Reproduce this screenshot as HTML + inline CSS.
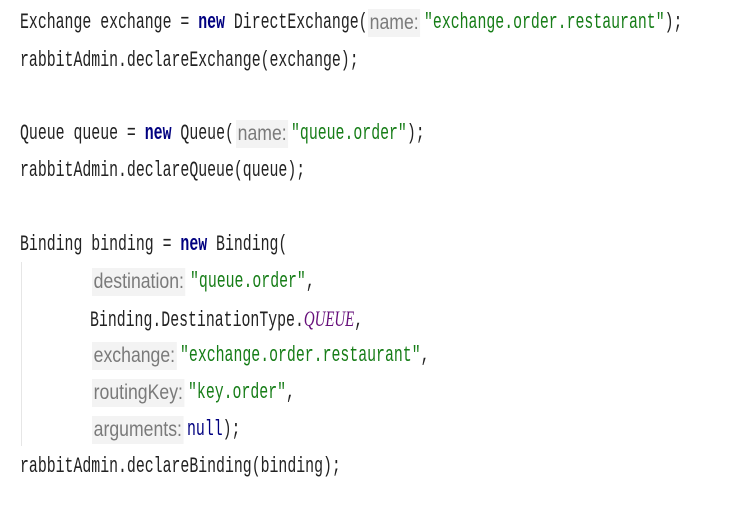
<!DOCTYPE html>
<html><head><meta charset="utf-8"><style>
body{margin:0;width:737px;height:513px;background:#fff;position:relative;overflow:hidden}
.m,.h{position:absolute;height:28px;line-height:28px;white-space:pre;transform-origin:0 50%}
.m{font-family:"Liberation Mono",monospace;font-size:22px;color:#222;transform:scaleX(0.675)}
.h{font-family:"Liberation Sans",sans-serif;font-size:21px;color:#7a7a7a;transform:scaleX(0.84);background:#f3f3f3;padding:0 2px}
.k{color:#000080;font-weight:bold}
.s{color:#167d17}
.q{color:#660e7a;font-style:italic;font-family:"Liberation Serif",serif}
.n{color:#000080}
.g{position:absolute;left:21px;top:262px;width:1px;height:184px;background:#e6e6e6}
</style></head><body>
<div class="g"></div>
<div class="m" style="left:20px;top:9px">Exchange exchange = <span class="k">new</span> DirectExchange(</div>
<div class="h" style="left:368px;top:9px">name:</div>
<div class="m" style="left:424px;top:9px"><span class="s">"exchange.order.restaurant"</span>);</div>

<div class="m" style="left:20px;top:47px">rabbitAdmin.declareExchange(exchange);</div>

<div class="m" style="left:20px;top:120px">Queue queue = <span class="k">new</span> Queue(</div>
<div class="h" style="left:236px;top:120px">name:</div>
<div class="m" style="left:291px;top:120px"><span class="s">"queue.order"</span>);</div>

<div class="m" style="left:20px;top:157px">rabbitAdmin.declareQueue(queue);</div>

<div class="m" style="left:20px;top:231px">Binding binding = <span class="k">new</span> Binding(</div>
<div class="h" style="left:92px;top:268px">destination:</div>
<div class="m" style="left:190px;top:268px"><span class="s">"queue.order"</span>,</div>
<div class="m" style="left:90px;top:305px">Binding.DestinationType.<span class="q">QUEUE</span>,</div>
<div class="h" style="left:92px;top:342px">exchange:</div>
<div class="m" style="left:180px;top:342px"><span class="s">"exchange.order.restaurant"</span>,</div>
<div class="h" style="left:92px;top:379px">routingKey:</div>
<div class="m" style="left:188px;top:379px"><span class="s">"key.order"</span>,</div>
<div class="h" style="left:92px;top:416px">arguments:</div>
<div class="m" style="left:187px;top:416px"><span class="n">null</span>);</div>

<div class="m" style="left:20px;top:453px">rabbitAdmin.declareBinding(binding);</div>
</body></html>
